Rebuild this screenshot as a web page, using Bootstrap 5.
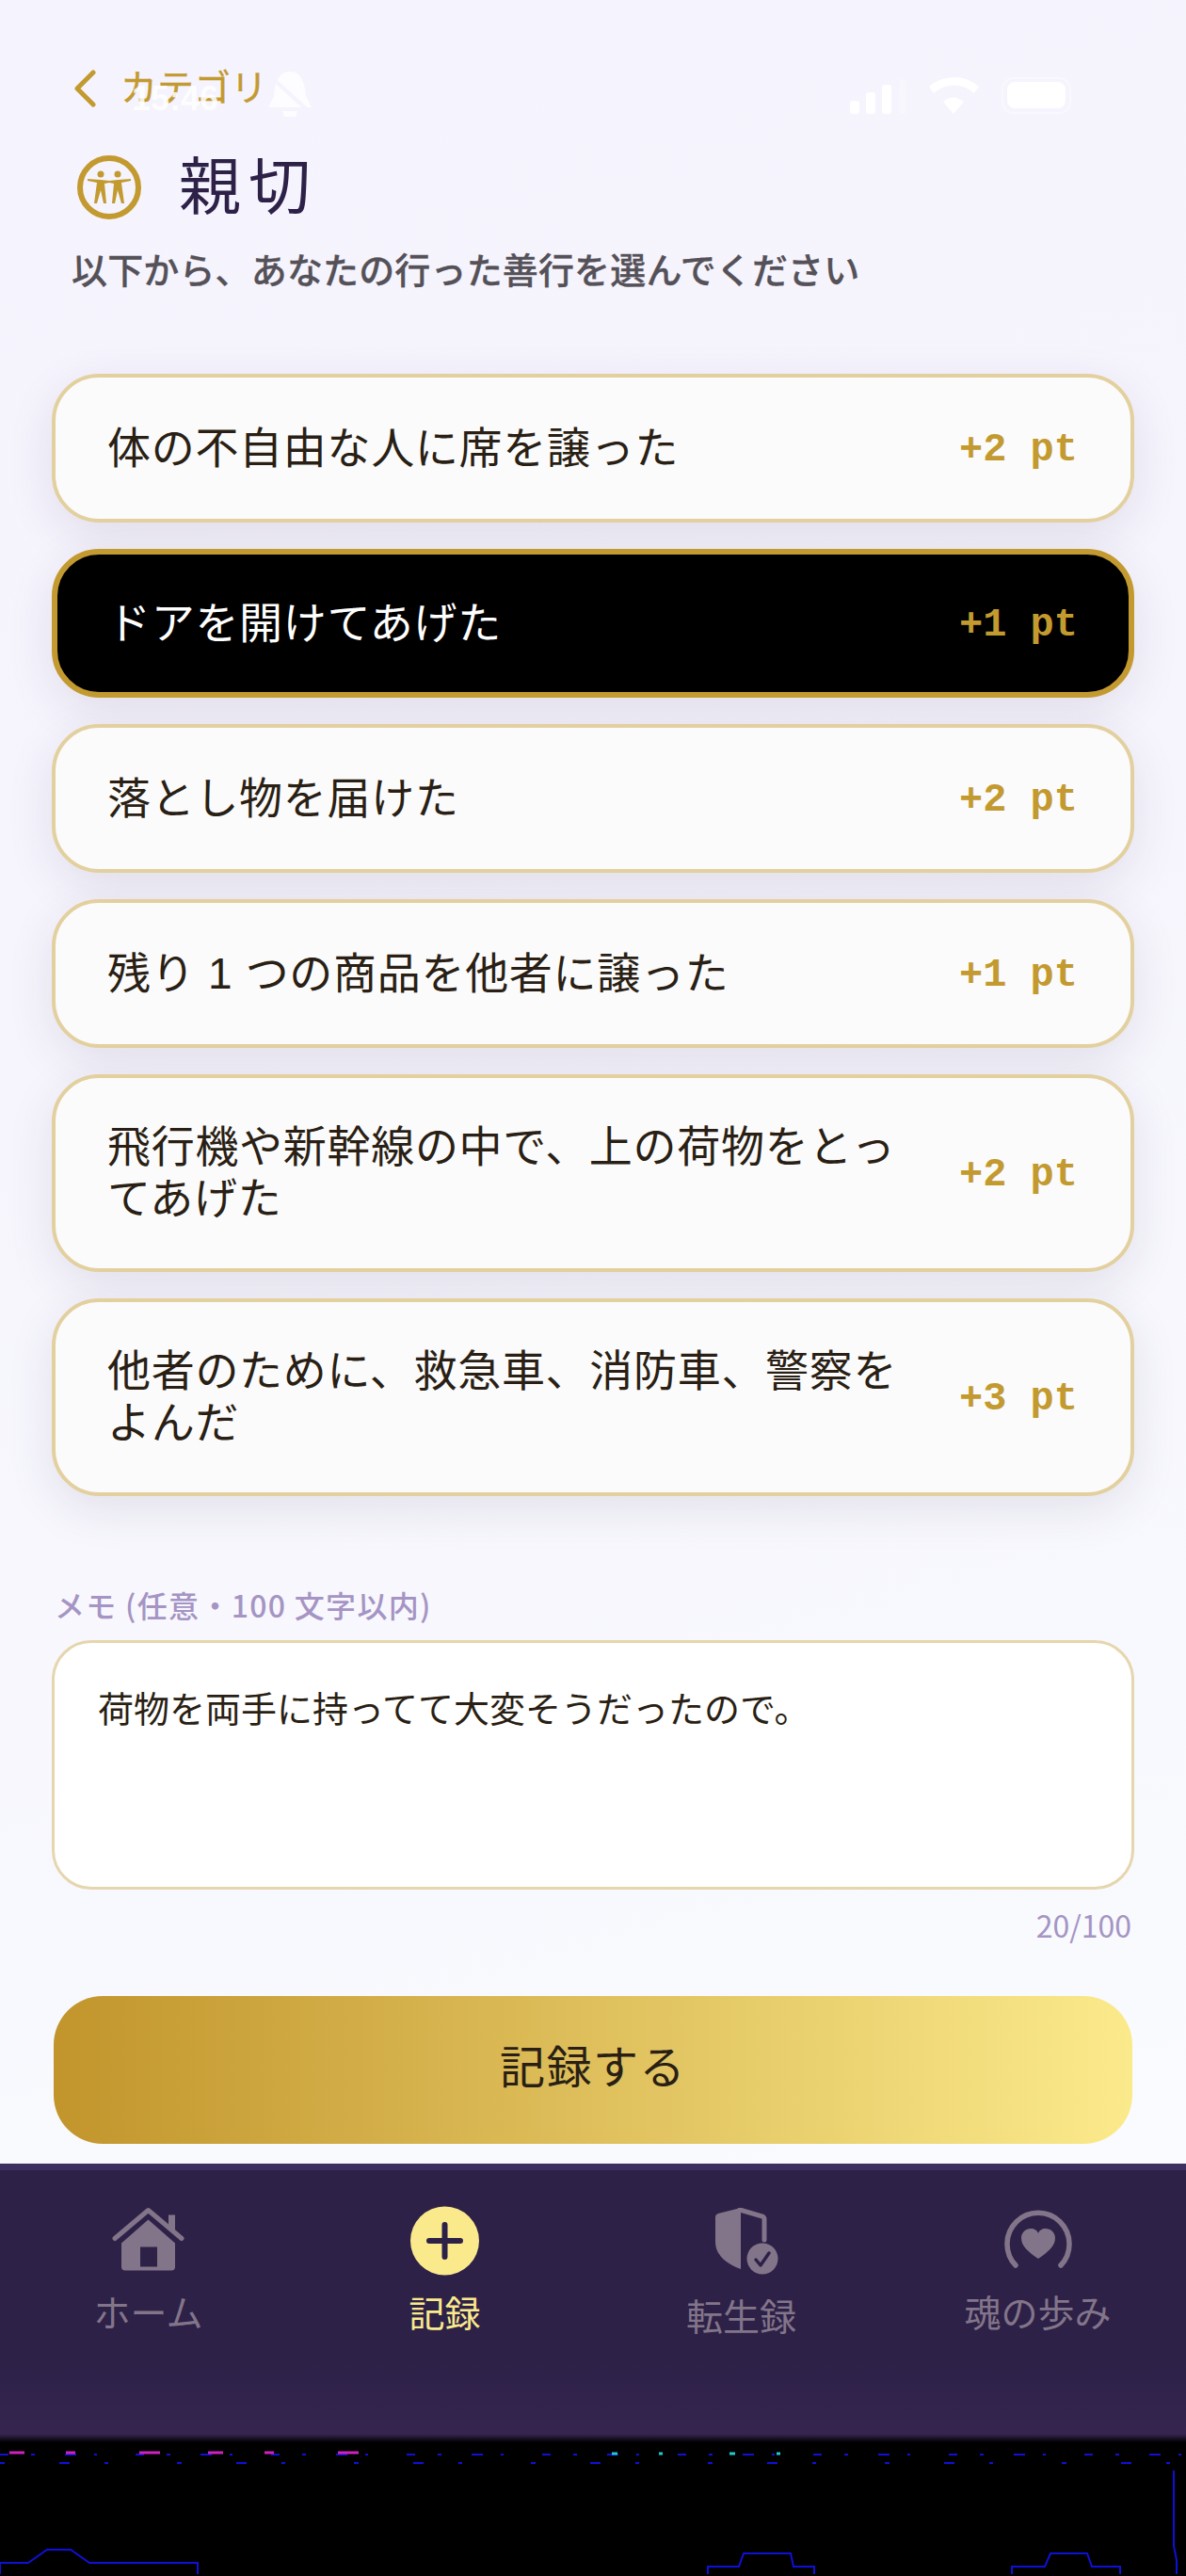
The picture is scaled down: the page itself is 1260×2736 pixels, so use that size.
<!DOCTYPE html>
<html lang="ja">

<head>
    <meta charset="UTF-8">
    <meta name="viewport" content="width=device-width, initial-scale=1.0">
    <title>親切</title>
    <link href="https://cdn.jsdelivr.net/npm/bootstrap@5.3.0/dist/css/bootstrap.min.css" rel="stylesheet">
    <style>
        body {
            height: 2736px;
            background: #000;
            font-family: "Liberation Sans", "Noto Sans CJK JP", sans-serif;
            color: #2a1f14;
        }
        .screen {
            position: relative;
            background: linear-gradient(165deg, #f5f3fd 0%, #f6f5fd 45%, #f9fbfe 100%);
            height: 2298px;
            padding: 74px 55px 0;
        }
        /* ghost of the status bar, lies over the header */
        .status-ghost {
            position: absolute;
            left: 0;
            top: 0;
            pointer-events: none;
        }
        .status-time {
            position: absolute;
            left: 140px;
            top: 84px;
            font: bold 36px "Liberation Sans", sans-serif;
            color: #fff;
            opacity: .85;
        }
        .back-row {
            height: 40px;
            margin-left: 22px;
            gap: 25px;
            color: #c39a30;
            font-size: 39px;
            line-height: 40px;
            -webkit-text-stroke: .4px #c39a30;
        }
        .title-row {
            margin: 50px 0 0 27px;
            gap: 40px;
            height: 70px;
        }
        .title-text {
            font-size: 66px;
            line-height: 70px;
            letter-spacing: 8px;
            color: #2d2148;
            font-weight: 400;
            margin: 0;
        }
        .sub-text {
            margin: 31px 0 0 21px;
            font-size: 38px;
            line-height: 46px;
            letter-spacing: .15px;
            font-weight: 500;
            color: #555158;
            -webkit-text-stroke: .3px #555158;
        }
        .deed-list {
            margin-top: 86px;
            gap: 28px;
        }
        .deed {
            min-height: 158px;
            border: 4px solid #e3d09f;
            border-radius: 50px;
            background: #fbfbfc;
            box-shadow: 0 14px 50px rgba(45, 33, 72, .1);
            padding: 46px 56px 46px 55px;
            color: #2a1f14;
            font-size: 46px;
            line-height: 55px;
            letter-spacing: .7px;
        }
        .deed.picked {
            background: #000;
            border: 6px solid #c39a30;
            padding: 44px 54px 44px 53px;
            color: #fff;
        }
        .deed-name {
            width: 850px;
        }
        .deed-pt {
            padding-top: 3px;
            font: bold 42px/50px "Liberation Mono", monospace;
            letter-spacing: 0;
            color: #c39a30;
            white-space: nowrap;
        }
        .memo-label {
            margin: 94px 0 0 3px;
            font-family: "Noto Sans CJK JP", sans-serif;
            font-size: 32px;
            line-height: 42px;
            letter-spacing: 1.300px;
            color: #a594c4;
            font-weight: 500;
        }
        .memo-box.form-control {
            display: block;
            margin-top: 17px;
            height: 265px;
            border: 3px solid #e6d6ae;
            border-radius: 42px;
            background: #fff;
            padding: 45px 46px;
            font-size: 38px;
            line-height: 52px;
            color: #2a1f14;
            resize: none;
            box-shadow: none;
        }
        .memo-count {
            margin-top: 19px;
            padding-right: 3px;
            font-family: "Noto Sans CJK JP", sans-serif;
            font-size: 32px;
            line-height: 37px;
            color: #a594c4;
        }
        .send-btn.btn {
            display: block;
            width: 1146px;
            height: 157px;
            margin: 57px 0 0 2px;
            padding-bottom: 10px;
            border: 0;
            border-radius: 52px;
            background: linear-gradient(90deg, #c2952c, #fbea8c);
            font-size: 48px;
            letter-spacing: 1.500px;
            color: #2a1f14;
        }
        .tabbar {
            height: 296px;
            border-top: 7px solid #3d3060;
            background: linear-gradient(180deg, #2d2148 0%, #2d2148 70%, #35254f 97%, #000 100%);
            padding-top: 32px;
        }
        .tab-item {
            color: #837589;
            font-size: 39px;
            line-height: 44px;
        }
        .tab-item.on {
            color: #fbea8c;
            font-size: 38px;
        }
        .tab-icon {
            height: 80px;
            margin-bottom: 19px;
        }
        .tab-low {
            margin-top: 4px;
        }
        .noise {
            height: 142px;
        }
    </style>
</head>

<body>
<div class="screen">
    <div class="back-row d-flex align-items-center">
        <svg width="26" height="40" viewBox="0 0 26 40"><path d="M22 3 5 20l17 17" fill="none" stroke="#c39a30" stroke-width="5" stroke-linecap="round" stroke-linejoin="round"/></svg>
        <span>カテゴリ</span>
    </div>

    <div class="title-row d-flex align-items-center">
        <svg width="68" height="70" viewBox="0 0 68 70">
            <circle cx="34" cy="35" r="31" fill="none" stroke="#c39a30" stroke-width="6"/>
            <g fill="#c39a30">
                <circle cx="25" cy="21" r="3.500"/>
                <circle cx="43" cy="21" r="3.500"/>
                <path d="M11 26 25 27 34 28 43 27 57 26 57 28 47 30 50 52 47 52 43 38 40 52 37 52 39 31 34 30 29 31 31 52 28 52 25 38 21 52 18 52 21 30 11 28Z"/>
            </g>
        </svg>
        <h1 class="title-text">親切</h1>
    </div>
    <p class="sub-text">以下から、あなたの行った善行を選んでください</p>

    <div class="deed-list d-flex flex-column">
        <div class="deed d-flex align-items-center justify-content-between">
            <span class="deed-name">体の不自由な人に席を譲った</span><span class="deed-pt">+2 pt</span>
        </div>
        <div class="deed picked d-flex align-items-center justify-content-between">
            <span class="deed-name">ドアを開けてあげた</span><span class="deed-pt">+1 pt</span>
        </div>
        <div class="deed d-flex align-items-center justify-content-between">
            <span class="deed-name">落とし物を届けた</span><span class="deed-pt">+2 pt</span>
        </div>
        <div class="deed d-flex align-items-center justify-content-between">
            <span class="deed-name">残り 1 つの商品を他者に譲った</span><span class="deed-pt">+1 pt</span>
        </div>
        <div class="deed d-flex align-items-center justify-content-between">
            <span class="deed-name">飛行機や新幹線の中で、上の荷物をとってあげた</span><span class="deed-pt">+2 pt</span>
        </div>
        <div class="deed d-flex align-items-center justify-content-between">
            <span class="deed-name">他者のために、救急車、消防車、警察をよんだ</span><span class="deed-pt">+3 pt</span>
        </div>
    </div>

    <label class="memo-label d-block" for="memo">メモ (任意・100 文字以内)</label>
    <textarea id="memo" class="memo-box form-control">荷物を両手に持ってて大変そうだったので。</textarea>
    <div class="memo-count text-end">20/100</div>
    <button type="button" class="send-btn btn">記録する</button>

    <div class="status-time">15:46</div>
    <svg class="status-ghost" width="1260" height="140" viewBox="0 0 1260 140" fill="#fff">
        <path opacity=".8" d="M308 76c-12 0-16 12-17 26l-6 12h46l-6-12c-1-14-5-26-17-26ZM300 118h16l-2 6h-12Z"/>
        <path d="M284 78 332 122" stroke="#f5f3fd" stroke-width="4"/>
        <rect x="903" y="107" width="10" height="14" rx="3"/>
        <rect x="920" y="98" width="10" height="23" rx="3"/>
        <rect x="937" y="90" width="10" height="31" rx="3"/>
        <rect x="955" y="84" width="8" height="37" rx="3" opacity=".25"/>
        <path d="M1013 121 1002 108a16 16 0 0 1 22 0ZM992 99l-5-7a40 40 0 0 1 53 0l-5 7a32 32 0 0 0-43 0Z"/>
        <rect x="1070" y="87" width="62" height="28" rx="8"/>
        <rect x="1065" y="83" width="72" height="37" rx="12" fill="none" stroke="#fff" stroke-width="2" opacity=".4"/>
    </svg>
</div>

<nav class="tabbar row g-0">
    <div class="col-3 tab-item d-flex flex-column align-items-center">
        <div class="tab-icon d-flex align-items-end justify-content-center">
            <svg width="77" height="73" viewBox="0 0 77 72">
                <path d="M60 8h7v20l-7-6Z" fill="#837589"/>
                <path d="M38.500 13 67 38v25a4 4 0 0 1-4 4H14a4 4 0 0 1-4-4V38Z" fill="#837589"/>
                <rect x="30" y="42" width="18" height="21" fill="#2d2148"/>
                <path d="M3 33 38.500 3 74 33" fill="none" stroke="#837589" stroke-width="5" stroke-linecap="round" stroke-linejoin="round"/>
            </svg>
        </div>
        <span>ホーム</span>
    </div>
    <div class="col-3 tab-item on d-flex flex-column align-items-center">
        <div class="tab-icon d-flex align-items-end justify-content-center">
            <svg width="73" height="74" viewBox="0 0 73 74">
                <circle cx="36.500" cy="37" r="36.500" fill="#fbea8c"/>
                <path d="M20 37h33M36.500 20v34" stroke="#2d2148" stroke-width="6" stroke-linecap="round"/>
            </svg>
        </div>
        <span>記録</span>
    </div>
    <div class="col-3 tab-item d-flex flex-column align-items-center">
        <div class="tab-icon d-flex align-items-end justify-content-center">
            <svg width="80" height="72" viewBox="-12 0 80 72">
                <path d="M27 0 3 6Q0 7 0 10v26c0 13 10 23 27 29Z" fill="#837589"/>
                <path d="M26 2 50 9q2 1 2 3v22" fill="none" stroke="#837589" stroke-width="5" stroke-linecap="round"/>
                <circle cx="50" cy="54" r="16.500" fill="#837589"/>
                <path d="M43 55l5 6 9-13" fill="none" stroke="#2d2148" stroke-width="3.500" stroke-linecap="round" stroke-linejoin="round"/>
            </svg>
        </div>
        <span class="tab-low">転生録</span>
    </div>
    <div class="col-3 tab-item d-flex flex-column align-items-center">
        <div class="tab-icon d-flex align-items-end justify-content-center">
            <svg width="72" height="71" viewBox="0 0 72 71">
                <path d="M12 60A33 33 0 1 1 60 60" fill="none" stroke="#837589" stroke-width="5.500" stroke-linecap="round"/>
                <path d="M36 53C26 46 18 40 18 31c0-6 5-10 10-10 4 0 7 2 8 5 1-3 4-5 8-5 5 0 10 4 10 10 0 9-8 15-18 22Z" fill="#837589"/>
            </svg>
        </div>
        <span>魂の歩み</span>
    </div>
</nav>

<!-- broken scanlines under the tab bar -->
<svg class="noise d-block" width="1260" height="142" viewBox="0 0 1260 142" fill="none">
    <path d="M0 13H1260" stroke="#1010d8" stroke-width="2" stroke-dasharray="9 24 4 32 12 19 3 41"/>
    <path d="M10 11H430" stroke="#d020c0" stroke-width="3" stroke-dasharray="16 44 10 68 22 51"/>
    <path d="M0 22H1260" stroke="#1010d8" stroke-width="2" stroke-dasharray="5 58 11 37 4 73"/>
    <path d="M650 12H860" stroke="#20c8d0" stroke-width="3" stroke-dasharray="6 44 4 71"/>
    <g stroke="#1010d8" stroke-width="2">
        <path d="M0 140V128H30L50 114H75L95 128H210V140"/>
        <path d="M752 140V132H785L790 118H840L843 132H865V140"/>
        <path d="M1075 140V132H1110L1116 118H1155L1160 132H1190V140"/>
        <path d="M1250 140V125L1247 110V30"/>
    </g>
</svg>

<script src="https://cdn.jsdelivr.net/npm/bootstrap@5.3.0/dist/js/bootstrap.bundle.min.js"></script>
</body>

</html>
